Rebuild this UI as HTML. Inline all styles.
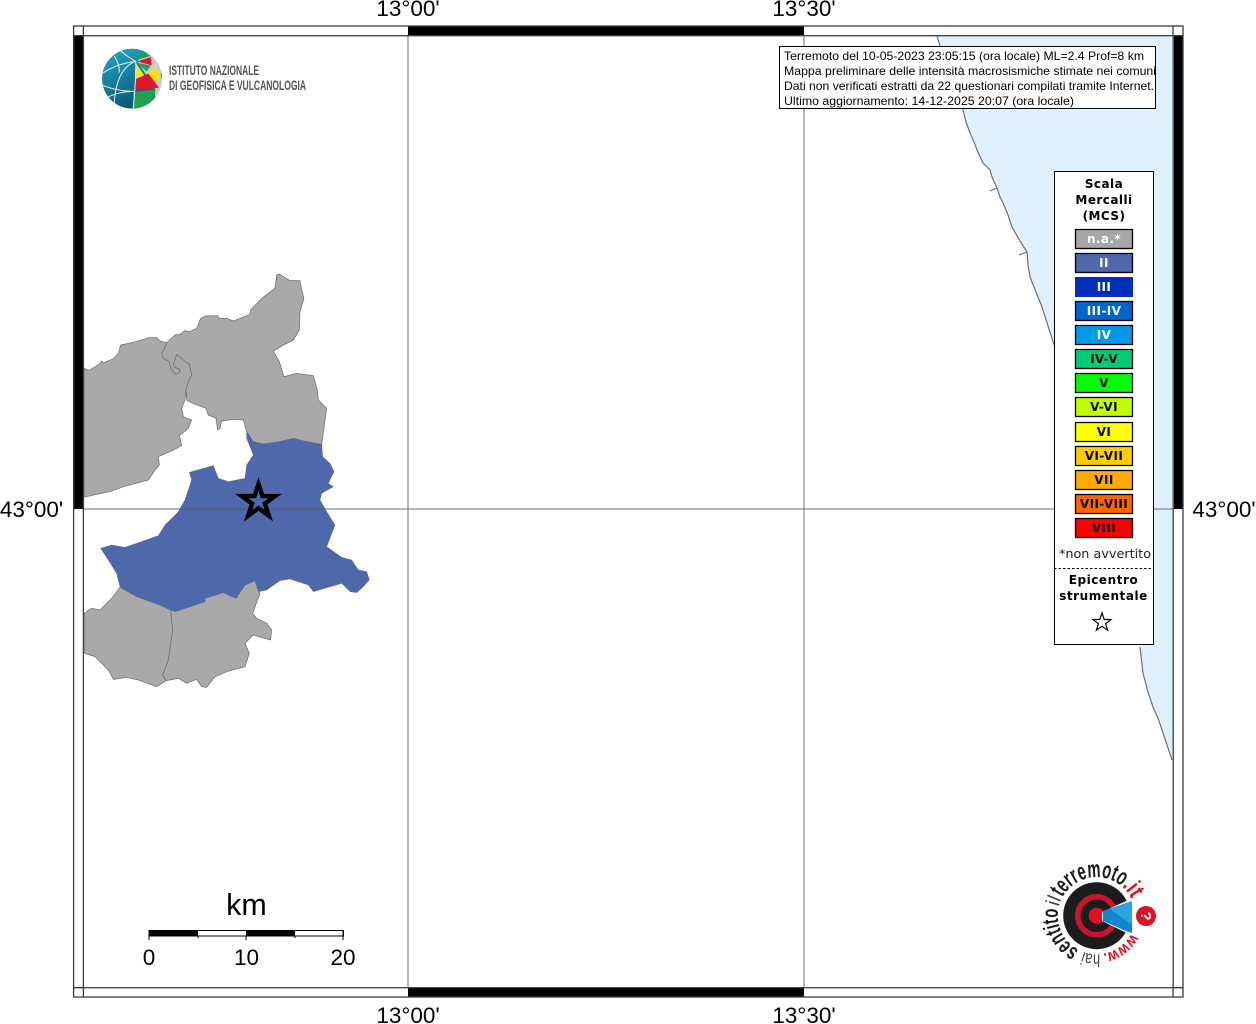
<!DOCTYPE html>
<html lang="it"><head><meta charset="utf-8"><title>Mappa</title>
<style>html,body{margin:0;padding:0;background:#fff;width:1256px;height:1024px;overflow:hidden}svg{display:block}
.ax{font:22.5px "Liberation Sans",sans-serif;fill:#000;text-anchor:middle}
.inf{font:12px "Liberation Sans",sans-serif;fill:#000}
.lg{font:bold 12px "DejaVu Sans",sans-serif;fill:#000;text-anchor:middle;letter-spacing:.45px}
.sw{font:bold 12px "DejaVu Sans",sans-serif;text-anchor:middle;letter-spacing:.4px}
</style></head><body>
<svg width="1256" height="1024" viewBox="0 0 1256 1024" xmlns="http://www.w3.org/2000/svg">
<rect width="1256" height="1024" fill="#fff"/>
<!-- sea -->
<path d="M937,36 L940,46 L948,68 L956,90 L963,110 L966,122 L970,133 L974,142 L977,150 L983,163 L990,170 L992,177 L997,188 L1000,197 L1003,203 L1008,215 L1012,227 L1020,241 L1027,252 L1028,265 L1030,277 L1036,292 L1042,307 L1054,345 L1140,647 L1143,673 L1148,692 L1153,707 L1158,718 L1163,733 L1172,760 L1173,760 L1173,36 Z" fill="#e0f1fd"/>
<path d="M937,36 L940,46 L948,68 L956,90 L963,110 L966,122 L970,133 L974,142 L977,150 L983,163 L990,170 L992,177 L997,188 L1000,197 L1003,203 L1008,215 L1012,227 L1020,241 L1027,252 L1028,265 L1030,277 L1036,292 L1042,307 L1054,345 M1140,647 L1143,673 L1148,692 L1153,707 L1158,718 L1163,733 L1172,760 M997,188 L990,191 M1027,252 L1019,255" fill="none" stroke="#707070" stroke-width="1.2"/>
<!-- regions -->
<g transform="translate(80,265) scale(.33333)" stroke="#707070" stroke-width="2.2" stroke-linejoin="round">
<path fill="#a9a9a9" d="M12,310 L28,316 L60,296 L65,288 L70,294 L100,281 L115,265 L122,240 L160,232 L195,222 L205,218 L230,218 L240,228 L260,233 L250,258 L245,264 L250,280 L268,290 L272,310 L288,328 L300,322 L298,312 L285,308 L280,298 L290,268 L310,285 L328,298 L335,330 L325,350 L318,375 L315,405 L305,430 L310,455 L335,465 L325,490 L298,512 L305,542 L270,560 L235,575 L238,600 L225,615 L205,645 L130,665 L90,680 L40,690 L12,697 Z"/>
<path fill="#a9a9a9" d="M260,233 L285,210 L300,208 L315,197 L330,200 L350,190 L362,160 L378,153 L412,152 L418,160 L440,160 L460,168 L510,148 L512,135 L545,100 L585,70 L590,30 L598,27 L630,47 L660,47 L665,75 L672,100 L660,140 L658,195 L640,225 L610,240 L580,258 L598,290 L612,335 L650,325 L700,332 L712,375 L715,405 L740,430 L725,538 L680,530 L640,520 L600,530 L550,537 L520,530 L500,500 L490,465 L460,463 L425,468 L420,490 L413,495 L408,460 L385,450 L378,430 L345,418 L320,405 L318,375 L325,350 L335,330 L328,298 L310,285 L290,268 L280,298 L285,308 L298,312 L300,322 L288,328 L272,310 L268,290 L250,280 L245,264 L250,258 Z"/>
<path fill="#a9a9a9" d="M120,967 L170,995 L240,1020 L272,1035 L278,1095 L265,1185 L248,1230 L258,1247 L230,1265 L175,1245 L140,1237 L100,1243 L85,1215 L45,1175 L12,1165 L12,1045 L35,1030 L60,1035 L95,1000 Z"/>
<path fill="#a9a9a9" d="M285,1040 L375,1010 L375,1000 L430,983 L468,1000 L495,960 L525,948 L540,985 L518,1045 L530,1060 L560,1075 L575,1095 L572,1125 L520,1110 L495,1135 L508,1165 L495,1205 L440,1220 L405,1235 L380,1267 L365,1265 L350,1243 L320,1255 L295,1240 L258,1247 L248,1230 L265,1185 L278,1095 L272,1035 Z"/>
<path fill="#4f67ab" stroke="#5a6c96" stroke-width="1.5" d="M500,500 L520,530 L550,537 L600,530 L640,520 L680,530 L725,538 L728,575 L750,595 L762,620 L745,655 L760,665 L725,685 L720,705 L740,740 L765,780 L740,845 L785,877 L815,885 L835,915 L860,920 L868,945 L850,965 L830,983 L810,980 L785,955 L700,980 L685,960 L630,942 L600,947 L560,975 L535,980 L525,948 L495,960 L468,1000 L430,983 L375,1000 L375,1010 L285,1040 L240,1020 L170,995 L135,975 L120,965 L110,925 L85,885 L62,850 L95,840 L135,847 L170,835 L235,812 L255,780 L295,740 L315,705 L335,645 L328,622 L400,602 L415,640 L445,650 L495,640 L500,600 L520,570 L500,520 Z"/>
</g>
<!-- grid -->
<g stroke="#555" stroke-width="1" fill="none" opacity=".85">
<path d="M408,36V988M804,36V988M83,509H1173"/>
</g>
<!-- frame -->
<g fill="#000"><rect x="74" y="36" width="9" height="473"/><rect x="1174" y="36" width="9" height="473"/><rect x="408" y="26" width="396" height="10"/><rect x="408" y="988" width="396" height="9"/></g>
<g fill="none" stroke="#3c3c3c" stroke-width="1.3"><rect x="73.6" y="26" width="1109.4" height="971"/><rect x="83.4" y="35.7" width="1089.8" height="952"/><path d="M73.6,35.7H83.4M83.4,26V35.7M1173,26V35.7M1173,35.7H1183M73.6,987.7H83.4M83.4,987.7V997M1173,987.7V997M1173,987.7H1183"/></g>
<!-- star -->
<path d="M258.5,484 L262.44,496.08 L275.14,496.09 L264.87,503.57 L268.79,515.66 L258.5,508.2 L248.21,515.66 L252.13,503.57 L241.86,496.09 L254.56,496.08 Z" fill="#4f67ab" stroke="#000" stroke-width="4.400" stroke-miterlimit="10"/>
<!-- axis labels -->
<text class="ax" x="408" y="16">13°00'</text><text class="ax" x="804" y="16">13°30'</text>
<text class="ax" x="408" y="1023">13°00'</text><text class="ax" x="804" y="1023">13°30'</text>
<text class="ax" x="31.500" y="517">43°00'</text><text class="ax" x="1224" y="517">43°00'</text>
<!-- INGV logo -->
<defs>
<clipPath id="gc"><circle cx="111" cy="110" r="90"/></clipPath>
<linearGradient id="tg" x1="0" y1="0" x2=".4" y2="1"><stop offset="0" stop-color="#27a6c6"/><stop offset=".6" stop-color="#14799b"/><stop offset="1" stop-color="#0b5a72"/></linearGradient>
<clipPath id="ib"><rect x="780" y="47" width="375" height="61"/></clipPath>
<path id="ring" d="M1135.1,922.5 A39,39 0 0 1 1058.3,908.9 A39,39 0 0 1 1135.1,922.5 A39,39 0 0 1 1058.3,908.9 A39,39 0 0 1 1135.1,922.5"/>
</defs>
<g transform="translate(95,42) scale(.33333)">
<g clip-path="url(#gc)">
<circle cx="111" cy="110" r="90" fill="url(#tg)"/>
<path d="M128,58 L145,15 L210,40 L210,210 L180,210 L180,142 Z" fill="#d4c8d4"/>
<path d="M126,54 L142,24 L166,42 Z" fill="#22a04f"/>
<path d="M127,58 L168,45 L170,70 Z" fill="#e2142d"/>
<path d="M125,62 L168,71 L155,88 Z" fill="#22a04f"/>
<path d="M122,62 L148,100 L120,112 Z" fill="#f2e21a"/>
<path d="M155,90 L185,78 L198,108 L178,126 Z" fill="#f2e21a"/>
<path d="M120,112 L160,95 L192,137 L118,146 Z" fill="#e2142d"/>
<path d="M115,150 L182,142 L174,186 L113,208 Z" fill="#22a04f"/>
<path d="M174,186 L182,165 L190,170 L176,192 Z" fill="#e2142d"/>
<path d="M196,92 L205,100 L200,112 Z" fill="#22a04f"/>
<g fill="none" stroke="#fff" stroke-width="3" opacity=".9">
<path d="M122,58 C100,45 85,35 72,22 M122,58 C90,70 60,105 57,195 M122,58 C125,100 118,150 115,205 M122,58 C90,62 55,72 25,92"/>
<path d="M22,130 C60,145 90,148 118,148 M58,42 C68,60 75,75 72,92 M30,170 C60,152 90,148 118,148"/>
</g></g></g>
<text x="169" y="75" font-family="'Liberation Sans Narrow','Liberation Sans',sans-serif" font-weight="bold" font-size="14" fill="#555" textLength="90" lengthAdjust="spacingAndGlyphs">ISTITUTO NAZIONALE</text>
<text x="169" y="90" font-family="'Liberation Sans Narrow','Liberation Sans',sans-serif" font-weight="bold" font-size="14" fill="#555" textLength="137" lengthAdjust="spacingAndGlyphs">DI GEOFISICA E VULCANOLOGIA</text>
<!-- info box -->
<rect x="779.5" y="46.5" width="376" height="62" fill="#fff" stroke="#000"/>
<g clip-path="url(#ib)">
<text class="inf" x="784" y="60" textLength="360" lengthAdjust="spacingAndGlyphs">Terremoto del 10-05-2023 23:05:15 (ora locale) ML=2.4 Prof=8 km</text>
<text class="inf" x="784" y="75" textLength="372" lengthAdjust="spacingAndGlyphs">Mappa preliminare delle intensità macrosismiche stimate nei comuni</text>
<text class="inf" x="784" y="90" textLength="370" lengthAdjust="spacingAndGlyphs">Dati non verificati estratti da 22 questionari compilati tramite Internet.</text>
<text class="inf" x="784" y="105" textLength="290" lengthAdjust="spacingAndGlyphs">Ultimo aggiornamento: 14-12-2025 20:07 (ora locale)</text>
</g>
<!-- legend -->
<rect x="1054.5" y="171.5" width="99" height="473" fill="#fff" stroke="#000"/>
<text class="lg" x="1104" y="188">Scala</text><text class="lg" x="1104" y="204">Mercalli</text><text class="lg" x="1104" y="220">(MCS)</text>
<g stroke="#000" stroke-width="1.3">
<rect x="1075.5" y="229.5" width="57" height="19" fill="#a6a6a6"/>
<rect x="1075.5" y="253.5" width="57" height="19" fill="#4f67ab"/>
<rect x="1075" y="277" width="58" height="20" fill="#0030b8" stroke="none"/>
<rect x="1075.5" y="301.5" width="57" height="19" fill="#0066cc"/>
<rect x="1075.5" y="325.5" width="57" height="19" fill="#0099e6"/>
<rect x="1075.5" y="349.5" width="57" height="19" fill="#00cc77"/>
<rect x="1075.5" y="373.5" width="57" height="19" fill="#00ff00"/>
<rect x="1075.5" y="397.5" width="57" height="19" fill="#bfff00"/>
<rect x="1075.5" y="422.5" width="57" height="19" fill="#ffff00"/>
<rect x="1075.5" y="446.5" width="57" height="19" fill="#ffcc00"/>
<rect x="1075.5" y="470.5" width="57" height="19" fill="#ffaa00"/>
<rect x="1075.5" y="494.5" width="57" height="19" fill="#ff6600"/>
<rect x="1075.5" y="518.5" width="57" height="19" fill="#ff0000"/>
</g>
<g fill="#fff"><text class="sw" x="1104" y="243">n.a.*</text><text class="sw" x="1104" y="267">II</text><text class="sw" x="1104" y="291">III</text><text class="sw" x="1104" y="315">III-IV</text><text class="sw" x="1104" y="339">IV</text></g>
<g fill="#000"><text class="sw" x="1104" y="363">IV-V</text><text class="sw" x="1104" y="387">V</text><text class="sw" x="1104" y="411">V-VI</text><text class="sw" x="1104" y="436">VI</text><text class="sw" x="1104" y="460">VI-VII</text><text class="sw" x="1104" y="484">VII</text><text class="sw" x="1104" y="508">VII-VIII</text><text class="sw" x="1104" y="532">VIII</text></g>
<text x="1105" y="558" font-family="'DejaVu Sans',sans-serif" font-size="12.800" text-anchor="middle" fill="#222">*non avvertito</text>
<path d="M1054,568.5H1154" stroke="#000" stroke-dasharray="2.5 2" fill="none"/>
<text class="lg" x="1103.500" y="584" style="letter-spacing:.55px">Epicentro</text><text class="lg" x="1103.500" y="600" style="letter-spacing:.55px">strumentale</text>
<path d="M1102,613 L1104.200,619.400 L1111,619.600 L1105.600,623.700 L1107.600,630.200 L1102,626.300 L1096.400,630.200 L1098.400,623.700 L1093,619.600 L1099.800,619.400 Z" fill="#fff" stroke="#000" stroke-width="1.200" stroke-miterlimit="10"/>
<!-- scale bar -->
<text x="246.500" y="915" font-family="'Liberation Sans',sans-serif" font-size="30.500" text-anchor="middle">km</text>
<rect x="149.500" y="930.500" width="194" height="5.500" fill="#fff" stroke="#000"/>
<rect x="149" y="930" width="49" height="6" fill="#000"/><rect x="246" y="930" width="49" height="6" fill="#000"/>
<path d="M149,930V940M198,936V938M246,936V940M295,936V938M343,930V940" stroke="#000" fill="none"/>
<g font-family="'Liberation Sans',sans-serif" font-size="22.500" text-anchor="middle"><text x="149" y="965">0</text><text x="246.500" y="965">10</text><text x="343" y="965">20</text></g>
<!-- hai sentito logo -->
<circle cx="1096.700" cy="915.700" r="33.500" fill="#1c1c1c"/>
<circle cx="1096.700" cy="915.700" r="19" fill="none" stroke="#c8152c" stroke-width="5.500"/>
<circle cx="1096.700" cy="915.700" r="8" fill="#e30f22"/>
<path d="M1102,912 L1135,897 L1135,937 L1102,921 Z" fill="#fff"/>
<path d="M1103,911 L1132,901 L1132,933 L1127,931.500 L1103,921 Z" fill="#0f86cf"/>
<path d="M1110,909 L1132,901 L1132,925 Z" fill="#27a6df"/>
<circle cx="1146" cy="916" r="10" fill="#e30f22"/>
<text x="1146" y="921" font-family="'Liberation Sans',sans-serif" font-weight="bold" font-size="15" fill="#fff" text-anchor="middle" transform="rotate(90 1146 916)">?</text>
<g font-family="'Liberation Sans Narrow','Liberation Sans',sans-serif">
<text font-size="16" font-weight="bold" fill="#e30f22"><textPath href="#ring" startOffset="2.400%" textLength="36" lengthAdjust="spacingAndGlyphs">www.</textPath></text>
<text font-size="18" fill="#444"><textPath href="#ring" startOffset="10.400%" textLength="17" lengthAdjust="spacingAndGlyphs">hai</textPath></text>
<text font-size="23" font-weight="bold" fill="#1c1c1c"><textPath href="#ring" startOffset="14.900%" textLength="49" lengthAdjust="spacingAndGlyphs">sentito</textPath></text>
<text font-size="20" fill="#444"><textPath href="#ring" startOffset="25.400%" textLength="8.500" lengthAdjust="spacingAndGlyphs">il</textPath></text>
<text font-size="24" font-weight="bold" fill="#1c1c1c"><textPath href="#ring" startOffset="27.500%" textLength="69" lengthAdjust="spacingAndGlyphs">terremoto</textPath></text>
<text font-size="24" font-weight="bold" fill="#e30f22"><textPath href="#ring" startOffset="41.700%" textLength="16" lengthAdjust="spacingAndGlyphs">.it</textPath></text>
</g>
</svg>
</body></html>
